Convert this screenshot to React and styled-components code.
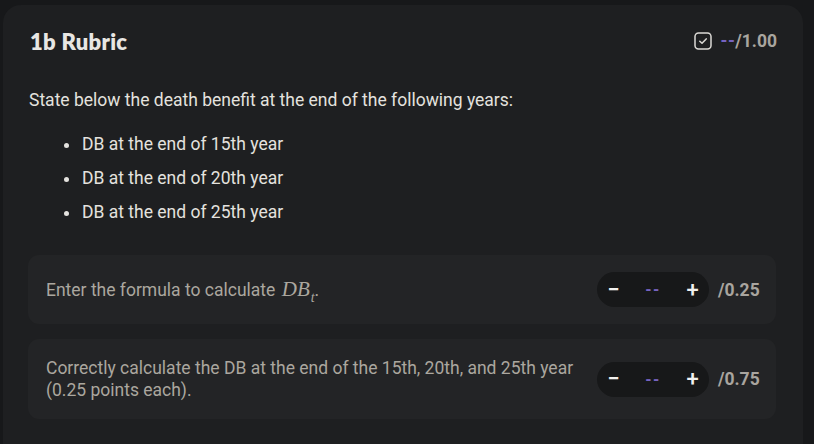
import React from "react";
import styled, { createGlobalStyle } from "styled-components";

const Global = createGlobalStyle`
  html, body { margin: 0; padding: 0; background: #17181a; }
  body { font-family: Roboto, "Noto Sans", sans-serif; -webkit-font-smoothing: antialiased; }
`;

const Page = styled.div`
  padding: 5px 11px 0 3px;
  height: 444px;
  box-sizing: border-box;
  overflow: hidden;
`;

const Card = styled.section`
  width: 800px;
  min-height: 460px;
  box-sizing: border-box;
  background: #1e1f21;
  border-radius: 18px;
  padding: 22px 27px 24px 25px;
`;

const Header = styled.div`
  display: flex;
  align-items: center;
  justify-content: space-between;
  padding-left: 2px;
  height: 28px;
`;

const Title = styled.h2`
  margin: 0;
  font-family: Lato, "Noto Sans", sans-serif;
  font-weight: 800;
  font-size: 22px;
  color: #e8e6e3;
  letter-spacing: 0.3px;
`;

const Score = styled.div`
  display: flex;
  align-items: center;
  gap: 9px;
  font-size: 17.5px;
  font-weight: 700;
  color: #a9a59f;
  margin-right: -1px;
`;

const Dashes = styled.span`
  color: #7663c0;
  font-weight: 700;
  letter-spacing: ${(p) => (p.$spaced ? "1.5px" : "0.5px")};
`;

const Prompt = styled.p`
  margin: 34px 0 0 1px;
  font-size: 17.5px;
  line-height: 22px;
  color: #e4e2df;
`;

const List = styled.ul`
  margin: 22px 0 0;
  padding-left: 52px;
  list-style: disc;
  color: #e4e2df;
`;

const Item = styled.li`
  font-size: 17.5px;
  line-height: 22px;
  margin-bottom: 12px;
  padding-left: 2px;
  &::marker { font-size: 15px; }
`;

const Criteria = styled.div`
  display: flex;
  flex-direction: column;
  gap: 15px;
  margin-top: 32px;
`;

const Criterion = styled.div`
  display: flex;
  align-items: center;
  gap: 20px;
  background: #232426;
  border-radius: 11px;
  padding: ${(p) => (p.$tall ? "18px" : "17px")} 16px ${(p) => (p.$tall ? "18px" : "17px")} 18px;
`;

const CriterionText = styled.div`
  flex: 1;
  font-size: 17.5px;
  line-height: 22px;
  color: #aba79f;
`;

const Math = styled.span`
  font-family: "Liberation Serif", "DejaVu Serif", serif;
  font-style: italic;
  font-size: 21px;
  color: #aba79f;
  margin-left: 2px;
  sub {
    font-size: 14px;
    vertical-align: -6px;
    line-height: 0;
    margin-left: 1px;
  }
`;

const Controls = styled.div`
  display: flex;
  align-items: center;
  gap: 9px;
`;

const Stepper = styled.div`
  display: flex;
  align-items: center;
  justify-content: space-between;
  width: 112px;
  height: 35px;
  box-sizing: border-box;
  padding: 0 10px 0 10px;
  background: #171819;
  border-radius: 18px;
  font-size: 16px;
`;

const StepBtn = styled.button`
  border: none;
  background: none;
  padding: 0;
  width: 13px;
  color: #f2f1ef;
  font-family: Roboto, sans-serif;
  font-weight: 500;
  font-size: 22px;
  line-height: 1;
  text-align: center;
  cursor: pointer;
`;

const Max = styled.span`
  font-size: 17.5px;
  font-weight: 700;
  color: #a9a59f;
  width: 42px;
`;

const CheckIcon = () => (
  <svg width="18" height="18" viewBox="0 0 18 18" fill="none">
    <rect x="1" y="1" width="16" height="16" rx="3.5" stroke="#dcdad6" strokeWidth="1.5" />
    <path d="M5.8 9.2l2.2 2.1 4.2-4.4" stroke="#dcdad6" strokeWidth="1.5" strokeLinecap="round" strokeLinejoin="round" />
  </svg>
);

const Row = ({ tall, children, max }) => (
  <Criterion $tall={tall}>
    <CriterionText>{children}</CriterionText>
    <Controls>
      <Stepper>
        <StepBtn>−</StepBtn>
        <Dashes $spaced>--</Dashes>
        <StepBtn>+</StepBtn>
      </Stepper>
      <Max>{max}</Max>
    </Controls>
  </Criterion>
);

export default function App() {
  return (
    <>
      <Global />
      <Page>
        <Card>
          <Header>
            <Title>1b Rubric</Title>
            <Score>
              <CheckIcon />
              <span>
                <Dashes>--</Dashes>/1.00
              </span>
            </Score>
          </Header>
          <Prompt>State below the death benefit at the end of the following years:</Prompt>
          <List>
            <Item>DB at the end of 15th year</Item>
            <Item>DB at the end of 20th year</Item>
            <Item>DB at the end of 25th year</Item>
          </List>
          <Criteria>
            <Row max="/0.25">
              Enter the formula to calculate{" "}
              <Math>
                DB<sub>t</sub>
              </Math>
              .
            </Row>
            <Row tall max="/0.75">
              Correctly calculate the DB at the end of the 15th, 20th, and 25th year (0.25 points each).
            </Row>
          </Criteria>
        </Card>
      </Page>
    </>
  );
}
